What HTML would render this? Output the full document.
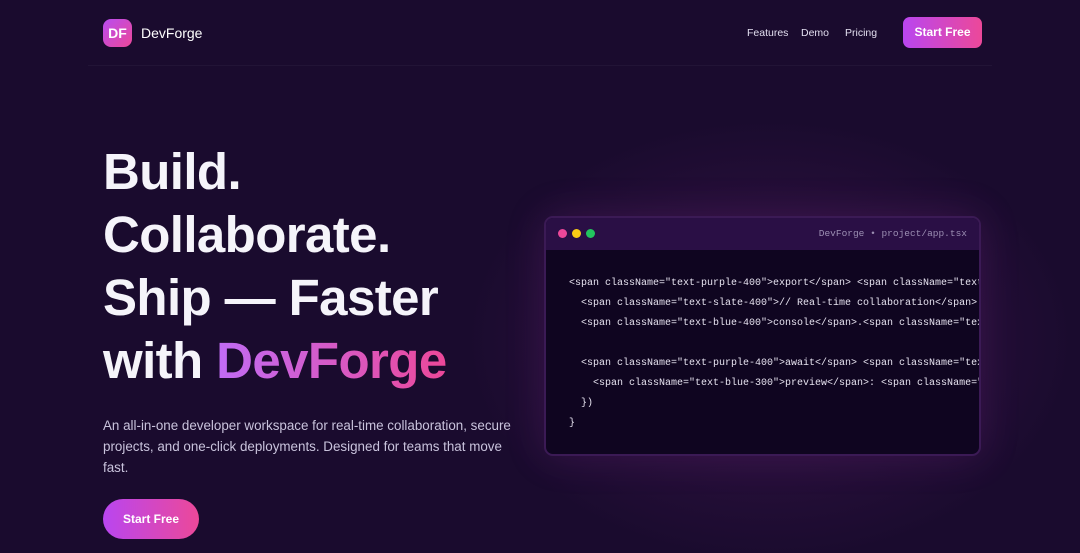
<!DOCTYPE html>
<html><head><meta charset="utf-8"><style>
*{margin:0;padding:0;box-sizing:border-box}
html,body{width:1080px;height:553px;overflow:hidden}
body{background:#1a0b2e;font-family:"Liberation Sans",sans-serif;color:#f1f0f7;position:relative}
.glow{position:absolute;left:440px;top:100px;width:660px;height:480px;background:radial-gradient(ellipse at center,rgba(120,40,130,0.3),rgba(26,11,46,0) 65%)}
.nav{position:absolute;left:88px;right:88px;top:0;height:66px;border-bottom:1px solid rgba(255,255,255,0.04)}
.logo{position:absolute;left:15px;top:19px;width:29px;height:28px;border-radius:8px;background:linear-gradient(135deg,#b84cf0,#ec4899);font-weight:bold;font-size:14px;color:#fff;text-align:center;line-height:28px}
.brand{position:absolute;left:53px;top:25px;font-size:14px;color:#fff}
.nl{position:absolute;top:27px;font-size:10.5px;color:#e2deef}
.btn{position:absolute;background:linear-gradient(90deg,#b946f0,#ec4899);color:#fff;font-weight:bold;text-align:center}
h1{position:absolute;left:103px;top:140px;font-size:51px;line-height:63px;font-weight:bold;color:#f5f4fa;letter-spacing:-0.6px}
h1 span{background:linear-gradient(90deg,#c06cf5,#ec4899);-webkit-background-clip:text;color:transparent}
p{position:absolute;left:103px;top:415px;width:425px;font-size:13.4px;line-height:21px;color:#c9c3dc}
.win{position:absolute;left:544px;top:216px;width:437px;height:240px;border-radius:9px;background:#0f0520;border:2px solid #3b1a55;overflow:hidden;box-shadow:0 0 40px rgba(150,50,160,0.2)}
.bar{height:32px;background:#2a0f45;position:relative}
.d{position:absolute;top:11px;width:9px;height:9px;border-radius:50%}
.ttl{position:absolute;right:12px;top:10px;font-family:"Liberation Mono",monospace;font-size:9.5px;color:#9c8fb3}
pre{position:absolute;left:23px;top:56px;font-family:"Liberation Mono",monospace;font-size:10px;line-height:20px;color:#e6e2ef;white-space:pre}
</style></head><body>
<div class="glow"></div>
<div class="nav">
<div class="logo">DF</div><div class="brand">DevForge</div>
<div class="nl" style="left:659px">Features</div>
<div class="nl" style="left:713px">Demo</div>
<div class="nl" style="left:757px">Pricing</div>
<div class="btn" style="left:815px;top:17px;width:79px;height:31px;border-radius:7px;font-size:12px;line-height:31px">Start Free</div>
</div>
<h1>Build.<br>Collaborate.<br>Ship — Faster<br>with <span>DevForge</span></h1>
<p>An all-in-one developer workspace for real-time collaboration, secure projects, and one-click deployments. Designed for teams that move fast.</p>
<div class="btn" style="left:103px;top:499px;width:96px;height:40px;border-radius:20px;font-size:12px;line-height:40px">Start Free</div>
<div class="win">
<div class="bar"><div class="d" style="left:12px;background:#ec4899"></div><div class="d" style="left:26px;background:#facc15"></div><div class="d" style="left:40px;background:#22c55e"></div><div class="ttl">DevForge • project/app.tsx</div></div>
<pre>&lt;span className="text-purple-400"&gt;export&lt;/span&gt; &lt;span className="text-pink-400"&gt;
  &lt;span className="text-slate-400"&gt;// Real-time collaboration&lt;/span&gt;
  &lt;span className="text-blue-400"&gt;console&lt;/span&gt;.&lt;span className="text-green-400"&gt;

  &lt;span className="text-purple-400"&gt;await&lt;/span&gt; &lt;span className="text-blue-400"&gt;
    &lt;span className="text-blue-300"&gt;preview&lt;/span&gt;: &lt;span className="text-green-300"&gt;
  })
}</pre>
</div>
</body></html>
